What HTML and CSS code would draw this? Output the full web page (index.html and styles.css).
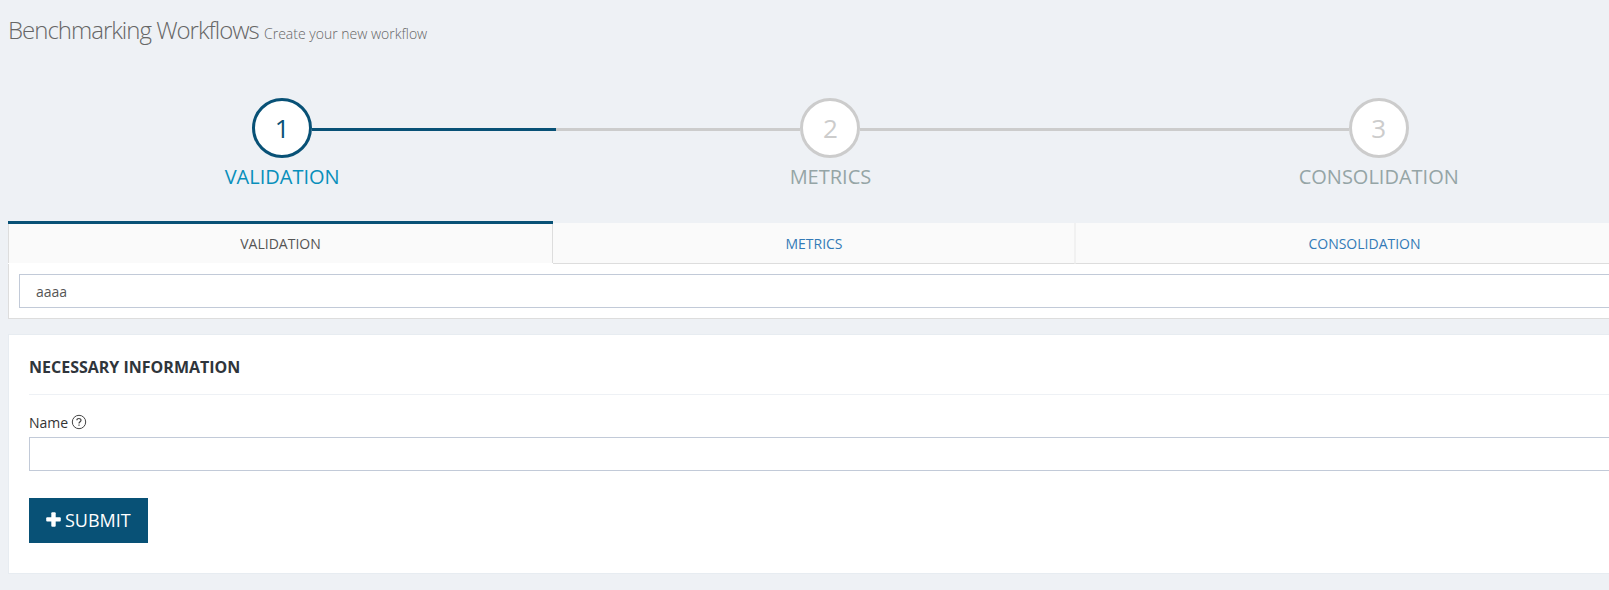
FILE: index.html
```html
<!DOCTYPE html>
<html lang="en">
<head>
<meta charset="utf-8">
<title>Benchmarking Workflows</title>
<link rel="stylesheet" href="styles.css">
</head>
<body>
<main class="page">
  <h1 class="page-title">Benchmarking Workflows <small>Create your new workflow</small></h1>
  <ol class="steps">
    <li class="step active"><div class="track"><span class="number">1</span></div><span class="label">Validation</span></li>
    <li class="step"><div class="track"><span class="number">2</span></div><span class="label">Metrics</span></li>
    <li class="step"><div class="track"><span class="number">3</span></div><span class="label">Consolidation</span></li>
  </ol>
  <nav class="tabs">
    <a class="tab current">VALIDATION</a>
    <a class="tab">METRICS</a>
    <a class="tab">CONSOLIDATION</a>
  </nav>
  <section class="tab-panel"><div class="field selected">aaaa</div></section>
  <section class="portlet">
    <h2 class="caption">NECESSARY INFORMATION</h2>
    <label class="name-label" for="name">Name
      <svg class="help" width="16" height="16" viewBox="0 0 16 16" fill="none" stroke="#444">
        <circle cx="8" cy="8" r="6.7"/>
        <path d="M5.9 6.3C5.9 3.9 10 3.9 10 6.2C10 7.7 8 7.7 8 9.4M8 10.5V11.8" stroke-width="1.2"/>
      </svg>
    </label>
    <input class="field" id="name" type="text">
    <button class="submit" type="button">
      <svg width="15" height="15" viewBox="0 0 15 15" fill="#fff"><rect x="5.3" y="0.3" width="4.4" height="14.4" rx="1"/><rect x="0.2" y="5.3" width="14.6" height="4.2" rx="1"/></svg>
      <span>SUBMIT</span>
    </button>
  </section>
</main>
</body>
</html>
```
FILE: styles.css
```css
* { box-sizing: border-box; }
body {
  margin: 0;
  height: 590px;
  overflow: hidden;
  background: #eef1f5;
  color: #333;
  font: 14px/20px "Open Sans", sans-serif;
}
.page { width: 1645px; margin-left: 8px; padding-top: 15px; }
.page-title {
  margin: 0;
  height: 83px;
  font-size: 24px;
  line-height: 30px;
  font-weight: 300;
  letter-spacing: -1px;
  color: #666;
}
.page-title small { font-size: 14px; letter-spacing: 0; color: #666; }
.steps {
  display: grid;
  grid-template-columns: repeat(3, 548.3px);
  height: 123px;
  margin: 0;
  padding: 0;
  list-style: none;
}
.step { color: #95a5a6; text-align: center; }
.track { display: flex; align-items: center; height: 60px; }
.track::before, .track::after { content: ""; flex: 1; height: 3px; margin-top: 3px; background: #ccc; }
.step:first-child .track::before, .step:last-child .track::after { background: none; }
.number {
  width: 60px;
  height: 60px;
  border: 3px solid #ccc;
  border-radius: 50%;
  background: #fff;
  color: #ccc;
  font-size: 26px;
  line-height: 55px;
}
.label { display: block; margin-top: 4px; font-size: 20px; line-height: 30px; text-transform: uppercase; }
.active { color: #088fbb; }
.active .track::after { background: #085176; }
.active .number { border-color: #085176; color: #085176; }
.tabs {
  display: grid;
  grid-template-columns: 545px 522px 578px;
  height: 43px;
  background: linear-gradient(#eef1f5 3px, #fff 3px);
}
.tab {
  height: 41px;
  margin-top: 2px;
  border-bottom: 1px solid #ddd;
  background: #fafafa;
  color: #337ab7;
  line-height: 42px;
  text-align: center;
}
.tab:nth-child(2) { padding-left: 1px; border-right: 1px solid #f1f1f1; }
.tab:nth-child(3) { border-left: 1px solid #f1f1f1; }
.current {
  height: 42px;
  margin-top: 0;
  border: 1px solid #ddd;
  border-width: 0 1px;
  color: #555;
  line-height: 40px;
}
.current::before { content: ""; display: block; height: 3px; margin: 0 -1px; background: #085176; }
.tab-panel { height: 55px; padding: 10px; border: 1px solid #ddd; border-top: 0; background: #fff; }
.field {
  display: block;
  width: 100%;
  height: 34px;
  border: 1px solid #c2cad8;
  background: #fff;
  color: #555;
  font: inherit;
}
.selected { padding: 7px 16px 5px; }
.portlet {
  height: 240px;
  margin-top: 15px;
  padding: 12px 20px 15px;
  border: 1px solid #e7ecf1;
  background: #fff;
}
.caption {
  height: 48px;
  margin: 0 0 17px;
  padding-top: 10px;
  border-bottom: 1px solid #eef1f5;
  color: #2f353b;
  font-size: 16px;
  line-height: 20px;
  font-weight: 700;
}
.name-label { display: flex; align-items: center; height: 25px; padding-bottom: 4px; gap: 3px; }
.help { margin-top: -2px; }
.submit {
  display: flex;
  align-items: center;
  gap: 4px;
  width: 119px;
  height: 45px;
  margin-top: 27px;
  padding: 0 16px 2px 17px;
  border: 0;
  background: #085176;
  color: #fff;
  font: 18px/24px "Open Sans", sans-serif;
}
```
